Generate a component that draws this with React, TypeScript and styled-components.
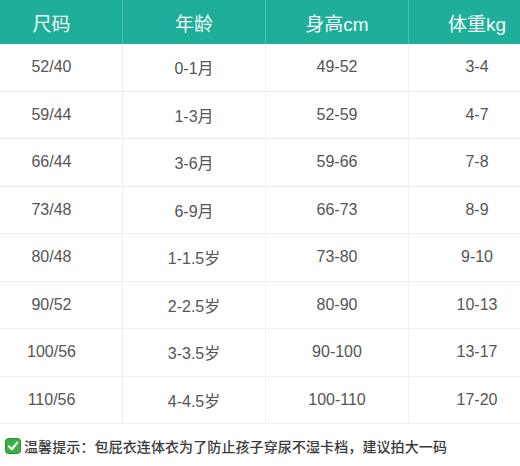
import React from "react";
import styled, { createGlobalStyle } from "styled-components";

const Global = createGlobalStyle`
  html, body { margin: 0; padding: 0; background: #fff; }
  body { width: 520px; height: 466px; overflow: hidden; }
`;

const Page = styled.div`
  width: 520px;
  height: 466px;
  overflow: hidden;
  background: #fff;
  font-family: "Liberation Sans", Arial, "Noto Sans CJK SC", sans-serif;
`;

const Table = styled.div`
  margin-left: -19px;
  width: 572px;
  display: grid;
  grid-template-columns: 142px 143px 143px 144px;
`;

const HeadCell = styled.div<{ $last?: boolean }>`
  height: 44px;
  background: #1fae99;
  color: #f2fbf9;
  font-size: 19px;
  display: flex;
  align-items: center;
  justify-content: center;
  border-right: ${(p) => (p.$last ? "none" : "1px solid #4cc0ae")};
  padding-right: ${(p) => (p.$last ? "8px" : "0")};
  box-sizing: border-box;
`;

const Cell = styled.div<{ $last?: boolean }>`
  height: 47.5px;
  box-sizing: border-box;
  display: flex;
  align-items: center;
  justify-content: center;
  font-size: 16px;
  color: #555;
  border-bottom: 1px solid #efefef;
  border-right: ${(p) => (p.$last ? "none" : "1px solid #f0f0f0")};
  padding-right: ${(p) => (p.$last ? "8px" : "0")};
`;

const Note = styled.div`
  display: flex;
  align-items: center;
  gap: 3px;
  height: 44px;
  padding-left: 5px;
  font-family: "Noto Sans CJK SC", sans-serif;
  font-size: 14px;
  font-weight: 500;
  color: #3a3a3a;
  letter-spacing: 0.1px;
`;

const CheckBox = () => (
  <svg width="16" height="16" viewBox="0 0 16 16">
    <rect x="0.5" y="0.5" width="15" height="15" rx="3" fill="#3cb043" stroke="#2b8a31" />
    <path d="M3.8 8.3 L6.8 11.2 L12.3 4.6" fill="none" stroke="#fff" strokeWidth="2.2" strokeLinecap="round" strokeLinejoin="round" />
  </svg>
);

const heads = ["尺码", "年龄", "身高cm", "体重kg"];
const rows = [
  ["52/40", "0-1月", "49-52", "3-4"],
  ["59/44", "1-3月", "52-59", "4-7"],
  ["66/44", "3-6月", "59-66", "7-8"],
  ["73/48", "6-9月", "66-73", "8-9"],
  ["80/48", "1-1.5岁", "73-80", "9-10"],
  ["90/52", "2-2.5岁", "80-90", "10-13"],
  ["100/56", "3-3.5岁", "90-100", "13-17"],
  ["110/56", "4-4.5岁", "100-110", "17-20"],
];

export default function App() {
  return (
    <Page>
      <Global />
      <Table>
        {heads.map((h, i) => (
          <HeadCell key={h} $last={i === 3}>{h}</HeadCell>
        ))}
        {rows.map((r, ri) =>
          r.map((c, ci) => (
            <Cell key={`${ri}-${ci}`} $last={ci === 3}>{c}</Cell>
          ))
        )}
      </Table>
      <Note>
        <CheckBox />
        <span>温馨提示：包屁衣连体衣为了防止孩子穿尿不湿卡档，建议拍大一码</span>
      </Note>
    </Page>
  );
}
